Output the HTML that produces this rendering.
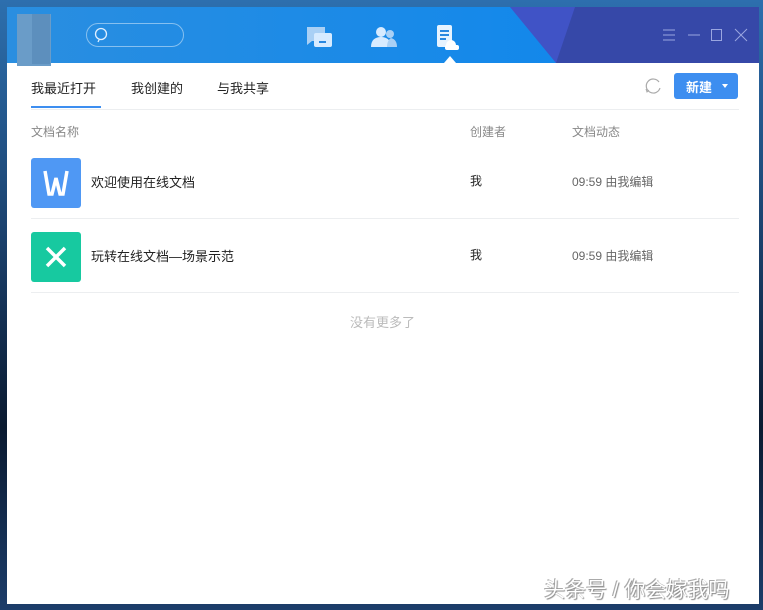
<!DOCTYPE html>
<html><head><meta charset="utf-8"><style>
body{margin:0;width:763px;height:610px;overflow:hidden;background:linear-gradient(180deg,#2d6fae 0%,#1a3f6a 40%,#0a1a30 70%,#1c3d6a 100%);font-family:"Liberation Sans","Noto Sans CJK SC",sans-serif;position:relative}
.win{position:absolute;left:7px;top:7px;width:752px;height:597px;background:#fff;overflow:hidden}
.hdr{position:absolute;left:0;top:0;width:752px;height:56px;background:linear-gradient(90deg,#2a8ee0,#0a86ef)}
.tri1{position:absolute;left:503px;top:0;width:249px;height:56px;background:#4053c6;clip-path:polygon(0 0,100% 0,100% 100%,46px 100%)}
.tri2{position:absolute;left:549px;top:0;width:203px;height:56px;background:#3648a8;clip-path:polygon(19px 0,100% 0,100% 100%,0 100%)}
.t{position:absolute;white-space:nowrap}
</style></head><body>
<div class="win">
<div class="hdr"></div><div class="tri1"></div><div class="tri2"></div>
<div style="position:absolute;left:10px;top:7px;width:34px;height:52px;background:#6a9cc8"></div>
<div style="position:absolute;left:25px;top:7px;width:18px;height:50px;background:#5d8fbd"></div>
<div style="position:absolute;left:79px;top:16px;width:96px;height:22px;border:1px solid rgba(255,255,255,.45);border-radius:12px"></div>
<svg style="position:absolute;left:87px;top:19px" width="16" height="18"><circle cx="7" cy="8" r="5.5" fill="none" stroke="#dfefff" stroke-width="1.3"/><path d="M5 14l-1 2" stroke="#dfefff" stroke-width="1.3"/></svg>
<svg style="position:absolute;left:298px;top:18px" width="30" height="26"><path d="M2 2h18v14H7l-5 4z" fill="#a9d0f5"/><rect x="9" y="8" width="18" height="14" rx="2" fill="#d7ebff"/><rect x="14" y="16" width="7" height="2" fill="#2a88e0"/></svg>
<svg style="position:absolute;left:362px;top:18px" width="30" height="26"><circle cx="12" cy="7" r="5" fill="#d7ebff"/><path d="M2 22c0-7 4-10 10-10s10 3 10 10z" fill="#d7ebff"/><circle cx="21" cy="9" r="4" fill="#a9d0f5"/><path d="M18 22c0-5 2-8 4-9 4 1 6 4 6 9z" fill="#a9d0f5"/></svg>
<svg style="position:absolute;left:428px;top:16px" width="26" height="30"><rect x="2" y="2" width="15" height="22" rx="2" fill="#e6f3ff"/><rect x="5" y="7" width="9" height="2" fill="#2a88e0"/><rect x="5" y="11" width="9" height="2" fill="#2a88e0"/><rect x="5" y="15" width="6" height="2" fill="#2a88e0"/><circle cx="16" cy="22" r="5" fill="#fff"/><rect x="10" y="22" width="14" height="5" rx="2" fill="#fff"/></svg>
<div style="position:absolute;left:437px;top:49px;width:0;height:0;border-left:6px solid transparent;border-right:6px solid transparent;border-bottom:7px solid #fff"></div>
<svg style="position:absolute;left:655px;top:20px" width="90" height="16" stroke="#9aa6e0" stroke-width="1" fill="none"><path d="M1 3h12M1 8h12M1 13h12"/><path d="M26 8h12"/><rect x="49.5" y="2.5" width="10" height="11"/><path d="M73 2l12 12M85 2L73 14"/></svg>
<div class="t" style="left:24px;top:71px;font-size:13px;color:#222">我最近打开</div>
<div class="t" style="left:124px;top:71px;font-size:13px;color:#222">我创建的</div>
<div class="t" style="left:210px;top:71px;font-size:13px;color:#222">与我共享</div>
<div style="position:absolute;left:24px;top:99px;width:70px;height:2px;background:#3d8ef0"></div>
<div style="position:absolute;left:24px;top:102px;width:708px;height:1px;background:#eceef0"></div>
<svg style="position:absolute;left:636px;top:69px" width="20" height="20"><path d="M16 6A7 7 0 1 0 17 12" fill="none" stroke="#aaa" stroke-width="1.2"/><path d="M3 13l1 3 2-2" fill="none" stroke="#aaa"/></svg>
<div style="position:absolute;left:667px;top:66px;width:64px;height:26px;background:#3d8ef0;border-radius:3px"></div>
<div class="t" style="left:679px;top:70px;font-size:13px;color:#fff;font-weight:bold">新建</div>
<div style="position:absolute;left:715px;top:77px;border-left:3px solid transparent;border-right:3px solid transparent;border-top:4px solid #fff"></div>
<div class="t" style="left:24px;top:116px;font-size:12px;color:#888">文档名称</div>
<div class="t" style="left:463px;top:116px;font-size:12px;color:#888">创建者</div>
<div class="t" style="left:565px;top:116px;font-size:12px;color:#888">文档动态</div>
<div style="position:absolute;left:24px;top:151px;width:50px;height:50px;background:#4f98f4;border-radius:3px"></div>
<svg style="position:absolute;left:24px;top:151px" width="50" height="50"><path d="M14 13l4 23h3l4-16 4 16h3l4-23" fill="none" stroke="#fff" stroke-width="3.5" stroke-linejoin="miter"/></svg>
<div class="t" style="left:84px;top:165px;font-size:13px;color:#222">欢迎使用在线文档</div>
<div class="t" style="left:463px;top:165px;font-size:12px;color:#222">我</div>
<div class="t" style="left:565px;top:166px;font-size:12px;color:#666">09:59 由我编辑</div>
<div style="position:absolute;left:24px;top:211px;width:708px;height:1px;background:#eceef0"></div>
<div style="position:absolute;left:24px;top:225px;width:50px;height:50px;background:#17c9a0;border-radius:3px"></div>
<svg style="position:absolute;left:24px;top:225px" width="50" height="50"><path d="M16 16l18 18M34 16L16 34" stroke="#fff" stroke-width="3.5"/></svg>
<div class="t" style="left:84px;top:239px;font-size:13px;color:#222">玩转在线文档—场景示范</div>
<div class="t" style="left:463px;top:239px;font-size:12px;color:#222">我</div>
<div class="t" style="left:565px;top:240px;font-size:12px;color:#666">09:59 由我编辑</div>
<div style="position:absolute;left:24px;top:285px;width:708px;height:1px;background:#eceef0"></div>
<div class="t" style="left:343px;top:305px;font-size:13px;color:#bbb">没有更多了</div>
<div class="t" style="left:537px;top:567px;font-size:21px;color:#fff;text-shadow:1px 1px 1px #888,-1px -1px 0 #aaa">头条号 / 你会嫁我吗</div>
</div>
</body></html>
